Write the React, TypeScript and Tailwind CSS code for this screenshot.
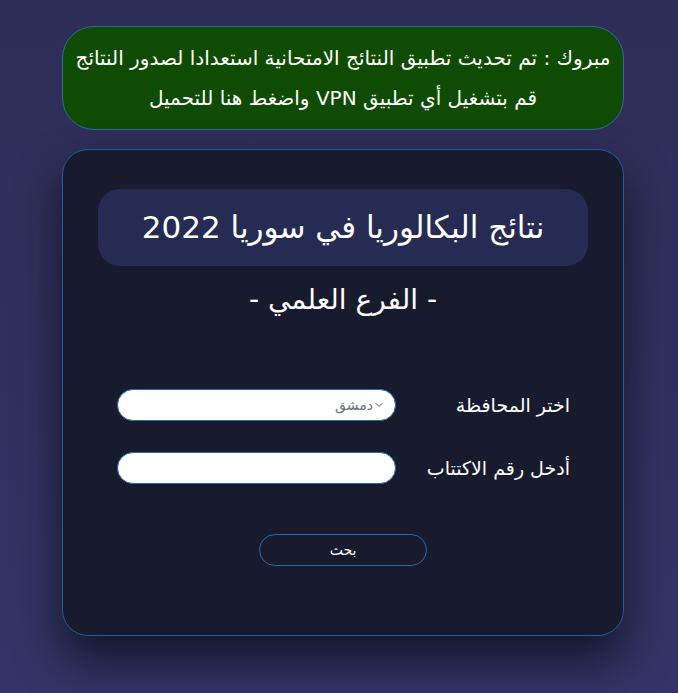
import { ChevronDown } from "lucide-react";

export default function App() {
  return (
    <div
      dir="rtl"
      className="min-h-[693px] w-full bg-gradient-to-b from-[#2e2d57] to-[#333566] pt-[26px] pb-[58px] font-['DejaVu_Sans',sans-serif] text-white"
    >
      <div className="mr-[54px] w-[562px]">
        <a className="flex h-[104px] flex-col items-center justify-center whitespace-nowrap rounded-[32px] border border-[#2b6aa5] bg-[#0f4b02] text-[20px] leading-[40px]">
          <span>مبروك : تم تحديث تطبيق النتائج الامتحانية استعدادا لصدور النتائج</span>
          <span>قم بتشغيل أي تطبيق VPN واضغط هنا للتحميل</span>
        </a>

        <div className="mt-[19px] h-[487px] rounded-[26px] border border-[#1f5e98] bg-[#181a2e] px-[35px] pt-[39px] shadow-[0_25px_45px_rgba(12,12,25,0.75)]">
          <div className="flex h-[77px] items-center justify-center rounded-[22px] bg-[#252b52]">
            <h1 className="text-[31px]">نتائج البكالوريا في سوريا 2022</h1>
          </div>
          <h2 className="mt-[13px] text-center text-[28px]">- الفرع العلمي -</h2>

          <div className="mt-[68px] flex flex-col gap-[31px] pr-[18px]">
            <div className="flex items-center gap-[32px]">
              <label className="w-[142px] shrink-0 whitespace-nowrap text-[19px]">اختر المحافظة</label>
              <div className="relative flex h-[32px] w-[279px] items-center rounded-full border border-[#2b6aa5] bg-white pr-[10px] text-[14px] text-[#6b7280]">
                <ChevronDown className="h-3 w-3 text-[#555]" strokeWidth={2} />
                <span>دمشق</span>
              </div>
            </div>
            <div className="flex items-center gap-[32px]">
              <label className="w-[142px] shrink-0 whitespace-nowrap text-[19px]">أدخل رقم الاكتتاب</label>
              <input className="h-[32px] w-[279px] rounded-full border border-[#2b6aa5] bg-white px-3 text-black outline-none" />
            </div>
          </div>

          <div className="mt-[50px] flex justify-center">
            <button className="h-[32px] w-[168px] rounded-full border border-[#2a6aa8] text-[14px] text-white">
              بحث
            </button>
          </div>
        </div>
      </div>
    </div>
  );
}
